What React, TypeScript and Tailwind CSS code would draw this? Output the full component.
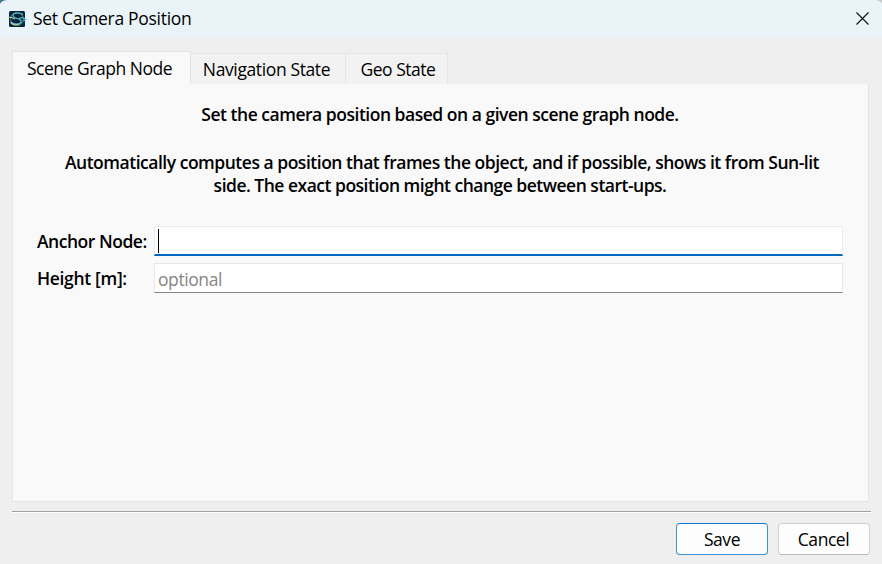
import React from "react";

function AppIcon() {
  return (
    <svg width="20" height="18" viewBox="0 0 20 18" fill="none">
      <rect x="2" y="1" width="16" height="16" rx="1.5" fill="#08243b" />
      <circle cx="10" cy="9" r="6.4" stroke="#397985" strokeWidth="1.1" />
      <path d="M16 4.5C13 2.2 6.2 2.5 6 5.500C6 9 14.500 8 14.200 11.400C14 14.700 7 15 3.500 12" stroke="#62c5d2" strokeWidth="1.1" />
      <path d="M.8 8C3 6 5.500 7.500 8 9M4 13C6.500 15.500 10 15 12 14" stroke="#c2d491" strokeWidth="1.1" />
      <path d="M12 8.500C15 7 17 7.500 19 9.500L16.500 11" stroke="#65cbe7" strokeWidth="1.1" />
    </svg>
  );
}

function TitleBar() {
  return (
    <header className="relative flex h-[37px] items-center bg-[#eaf4f8] pl-[7px]">
      <AppIcon />
      <h1 className="ml-[6px] whitespace-nowrap pb-[2px] text-[17.5px] leading-[24px] tracking-[-0.3px]">Set Camera Position</h1>
      <button aria-label="Close" className="mr-[13px] ml-auto">
        <svg width="13" height="13" viewBox="0 0 13 13" stroke="#111" strokeWidth="1.15">
          <path d="M.5 .5l12 12M12.500 .5l-12 12" />
        </svg>
      </button>
      <svg className="absolute top-0 left-0" width="7" height="5" viewBox="0 0 7 5">
        <path d="M0 0h7C3 .3 1 2 0 4z" fill="#407990" />
      </svg>
      <svg className="absolute top-0 right-0" width="7" height="5" viewBox="0 0 7 5">
        <path d="M7 0H0C4 .3 6 2 7 4z" fill="#c9cccd" />
      </svg>
    </header>
  );
}

function Tabs() {
  return (
    <nav className="flex h-[33px] items-end text-[17.5px]">
      <button className="z-10 -mb-px h-[34px] w-[179px] whitespace-nowrap border border-b-0 border-[#e5e5e5] bg-[#f9f9f9] pr-[4px] leading-[33px] tracking-[-0.47px]">Scene Graph Node</button>
      <button className="h-[31px] w-[155px] whitespace-nowrap border border-b-0 border-l-0 border-[#e5e5e5] bg-[#f2f2f2] pr-[3px] leading-[31px] tracking-[-0.38px]">Navigation State</button>
      <button className="h-[31px] w-[102px] whitespace-nowrap border border-b-0 border-l-0 border-[#e5e5e5] bg-[#f2f2f2] pl-[3px] leading-[31px] tracking-[-0.48px]">Geo State</button>
    </nav>
  );
}

export default function App() {
  return (
    <div className="flex h-[564px] w-[882px] flex-col overflow-hidden bg-[#efefef] font-['Open_Sans','Noto_Sans',sans-serif] text-[17.5px] text-black">
      <TitleBar />
      <main className="mt-[14px] ml-[12px] w-[857px]">
        <Tabs />
        <section className="h-[418px] border border-t-0 border-[#e5e5e5] bg-[#f9f9f9]">
          <div className="flex flex-col items-center pt-[18px] font-semibold leading-[24px]">
            <p className="whitespace-nowrap pr-px tracking-[-0.48px]">Set the camera position based on a given scene graph node.</p>
            <p className="mt-[24px] whitespace-nowrap pl-[3px] tracking-[-0.48px]">Automatically computes a position that frames the object, and if possible, shows it from Sun-lit</p>
            <p className="-mt-px whitespace-nowrap pr-px tracking-[-0.5px]">side. The exact position might change between start-ups.</p>
          </div>
          <form className="mt-[29px] ml-[24px] grid w-[806px] grid-cols-[117px_689px] gap-y-[7px]">
            <label className="whitespace-nowrap font-semibold leading-[30px] tracking-[-0.47px]">Anchor Node:</label>
            <div className="flex h-[30px] items-center border border-b-2 border-[#e8edf1] border-b-[#0067c0] bg-white pl-[3px]">
              <span className="h-[24px] w-px bg-black" />
            </div>
            <label className="whitespace-nowrap font-semibold leading-[30px] tracking-[-0.33px]">Height [m]:</label>
            <div className="h-[30px] border border-[#e8e8e8] border-b-[#868686] bg-white pl-[3px] leading-[30px] tracking-[-0.42px] text-[#858585]">optional</div>
          </form>
        </section>
      </main>
      <div className="mt-[9px] ml-[12px] h-[2px] w-[859px] border-t border-b border-t-[#a0a0a0] border-b-white" />
      <footer className="mt-[10px] mr-[12px] flex justify-end gap-[10px]">
        <button className="h-[32px] w-[92px] rounded-[4px] border border-[#3f91d1] border-t-[#0878cc] bg-[#fdfdfd] leading-[30px] tracking-[-0.45px]">Save</button>
        <button className="h-[32px] w-[92px] rounded-[4px] border border-[#d0d0d0] border-b-[#bcbcbc] bg-[#fdfdfd] pr-px leading-[30px] tracking-[-0.45px]">Cancel</button>
      </footer>
    </div>
  );
}
